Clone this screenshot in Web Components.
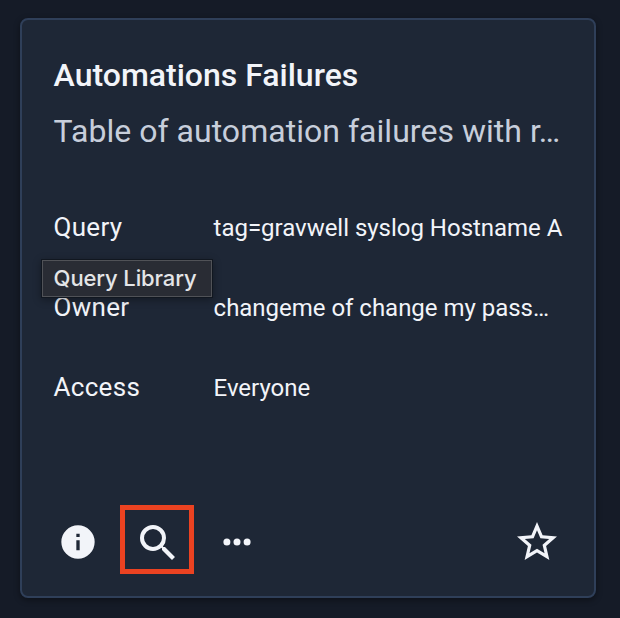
<!DOCTYPE html>
<html lang="en"><head><meta charset="utf-8"><title>Query Library</title>
<style>
html{height:100%;background:#151b27}
body{margin:0;padding:18px 24px 20px 20px;height:618px;box-sizing:border-box;overflow:hidden;background:#151b27;font-family:Roboto,sans-serif;color:#f2f4f9}
</style></head><body>
<query-card>
<span slot="title">Automations Failures</span>
<span slot="subtitle">Table of automation failures with r…</span>
<info-row label="Query">tag=gravwell syslog Hostname A</info-row>
<info-row label="Owner">changeme of change my pass…<hover-tip slot="tip">Query Library</hover-tip></info-row>
<info-row label="Access">Everyone</info-row>
<card-actions slot="actions"></card-actions>
</query-card>
<script>
const define=(name,html)=>customElements.define(name,class extends HTMLElement{
  constructor(){super();this.attachShadow({mode:'open'}).innerHTML=html;
    const l=this.shadowRoot.querySelector('.label');if(l)l.textContent=this.getAttribute('label');}
});
define('query-card',`<style>
:host{display:flex;flex-direction:column;box-sizing:border-box;height:580px;border:2px solid #2f3f59;border-radius:8px;background:#1e2736;box-shadow:0 2px 6px #0006;padding:32px 0 0 31.6px}
.title{font-size:32px;line-height:46px;font-weight:500;white-space:nowrap}
.sub{font-size:32px;line-height:46px;color:#c7cedb;margin-top:10px;white-space:nowrap;letter-spacing:.03px}
.rows{margin-top:33px;display:flex;flex-direction:column}
.actions{margin-top:80px}
</style><div class="title"><slot name="title"></slot></div><div class="sub"><slot name="subtitle"></slot></div><div class="rows"><slot></slot></div><div class="actions"><slot name="actions"></slot></div>`);
define('info-row',`<style>
:host{display:grid;grid-template-columns:160px 1fr;align-items:baseline;height:80px;line-height:80px;position:relative;white-space:nowrap}
.label{font-size:26px;letter-spacing:.28px}
.value{font-size:24px;letter-spacing:-.02px}
</style><div class="label"></div><div class="value"><slot></slot></div><slot name="tip"></slot>`);
define('hover-tip',`<style>
:host{position:absolute;left:-12.6px;top:-8px;box-sizing:border-box;width:172px;height:39px;border:1px solid #111720;box-shadow:inset 0 0 0 1px #505257,0 2px 8px #0005;background:#292c34;color:#e4e5e7;font:500 22px/36px Inter,sans-serif;padding-left:11.6px;letter-spacing:-.12px}
</style><slot></slot>`);
define('card-actions',`<style>
:host{display:flex;align-items:center;height:70px}
svg{display:block;fill:#f2f4f9}
.info{margin-left:4px}
.hit{box-sizing:border-box;width:74px;height:69px;border:5px solid #eb4221;margin:-6px 0 0 22.4px;padding:9px 0 0 8.6px}
.more{margin-left:26px}
.star{margin-left:258.8px}
</style>
<svg class="info" width="40" height="40" viewBox="0 0 24 24"><path d="M12 2a10 10 0 1 0 0 20 10 10 0 0 0 0-20zm1 15h-2v-6h2zm0-8h-2V7h2z"/></svg>
<div class="hit"><svg width="48" height="48" viewBox="0 0 24 24"><path d="M15.5 14h-.79l-.28-.27A6.47 6.47 0 0 0 16 9.5 6.5 6.5 0 1 0 9.5 16c1.61 0 3.09-.59 4.23-1.57l.27.28v.79l5 4.99L20.49 19zm-6 0a4.5 4.5 0 1 1 0-9 4.5 4.5 0 0 1 0 9z"/></svg></div>
<svg class="more" width="34" height="10" viewBox="0 0 34 10"><circle cx="6.9" cy="5" r="3.5"/><circle cx="17" cy="5" r="3.5"/><circle cx="27.1" cy="5" r="3.5"/></svg>
<svg class="star" width="48" height="48" viewBox="0 0 24 24"><path d="M22 9.24l-7.19-.62L12 2 9.19 8.63 2 9.24l5.46 4.73L5.82 21 12 17.27 18.18 21l-1.63-7.03zM12 15.4l-3.76 2.27 1-4.28-3.32-2.88 4.38-.38L12 6.1l1.71 4.04 4.38.38-3.32 2.88 1 4.28z"/></svg>`);
</script></body></html>
